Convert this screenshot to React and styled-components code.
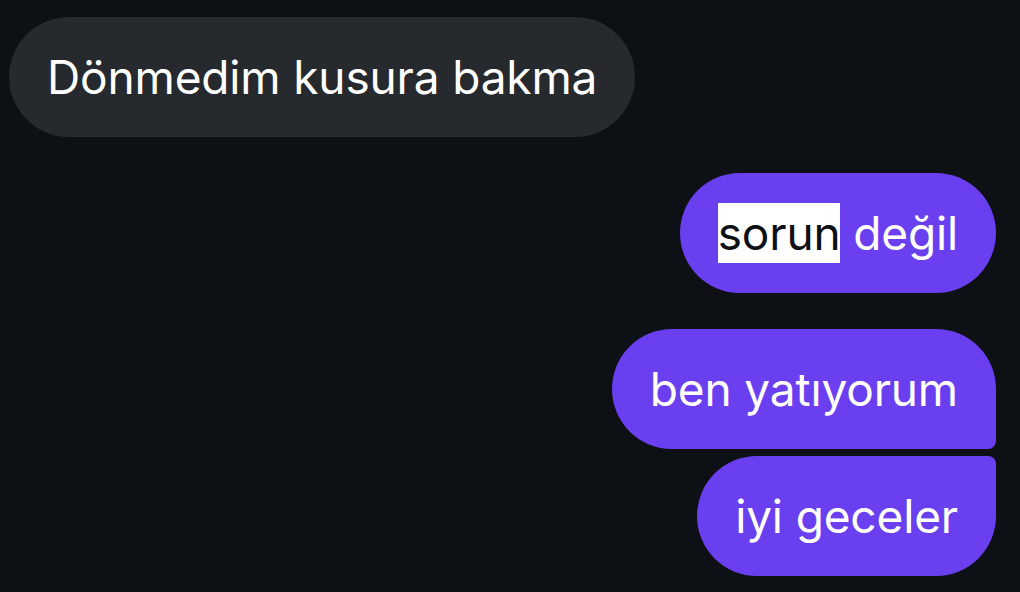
import React from "react";
import styled, { createGlobalStyle } from "styled-components";

const Global = createGlobalStyle`
  html, body { margin: 0; padding: 0; background: #0d1014; }
  body { font-family: Inter, "Noto Sans", sans-serif; }
`;

const Thread = styled.div`
  width: 1020px;
  height: 592px;
  box-sizing: border-box;
  padding: 17px 24px 0 9px;
  display: flex;
  flex-direction: column;
  background: #0d1014;
  overflow: hidden;
`;

const Group = styled.div`
  display: flex;
  flex-direction: column;
  align-items: ${(p) => (p.$mine ? "flex-end" : "flex-start")};
  gap: 7px;
  margin-top: ${(p) => (p.$first ? "0" : "36px")};
`;

const Bubble = styled.div`
  box-sizing: border-box;
  height: 120px;
  padding: 30px 38px;
  font-size: 46px;
  line-height: 60px;
  letter-spacing: -0.15px;
  color: #ffffff;
  white-space: nowrap;
  background: ${(p) => (p.$mine ? "#6a3ff0" : "#26292e")};
  border-radius: ${(p) => p.$radius || "60px"};
`;

const Selected = styled.span`
  display: inline-block;
  height: 60px;
  line-height: 60px;
  background: #ffffff;
  color: #0d1014;
  vertical-align: top;
`;

export default function App() {
  return (
    <>
      <Global />
      <Thread>
        <Group $first>
          <Bubble>Dönmedim kusura bakma</Bubble>
        </Group>
        <Group $mine>
          <Bubble $mine>
            <Selected>sorun</Selected> değil
          </Bubble>
        </Group>
        <Group $mine>
          <Bubble $mine $radius="60px 60px 8px 60px">ben yatıyorum</Bubble>
          <Bubble $mine $radius="60px 8px 60px 60px">iyi geceler</Bubble>
        </Group>
      </Thread>
    </>
  );
}
